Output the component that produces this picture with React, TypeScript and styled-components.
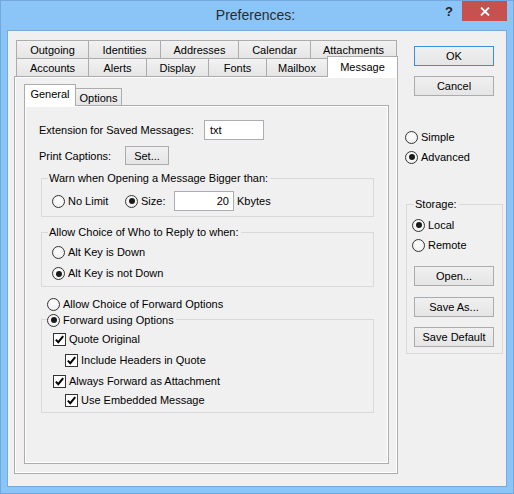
import React from 'react'
import styled, { createGlobalStyle } from 'styled-components'

const GlobalStyle = createGlobalStyle`
  body {
    margin: 0;
    font-family: "Liberation Sans", Arial, sans-serif;
    font-size: 11px;
    color: #000;
  }
  * {
    box-sizing: border-box;
  }
`

const Window = styled.div`
  width: 514px;
  height: 494px;
  background: #8bc5f7;
  border: 1px solid #74a8dc;
  display: flex;
  flex-direction: column;
`

const TitleBar = styled.div`
  height: 29px;
  flex-shrink: 0;
  display: flex;
  align-items: flex-start;
`

const Title = styled.div`
  flex: 1;
  padding-left: 72px;
  text-align: center;
  font-size: 14px;
  line-height: 29px;
  color: #2b2b2b;
`

const HelpButton = styled.div`
  width: 22px;
  height: 20px;
  margin-right: 2px;
  padding-top: 2px;
  text-align: center;
  font-weight: bold;
  font-size: 13px;
  line-height: 18px;
  color: #222;
`

const CloseButton = styled.div`
  width: 45px;
  height: 20px;
  margin-right: 6px;
  background: #c75050;
  display: flex;
  align-items: center;
  justify-content: center;
`

const Client = styled.div`
  flex: 1;
  margin: 0 6px 6px;
  border: 1px solid #76a9dc;
  background: #f0f0f0;
  display: flex;
  align-items: flex-start;
  padding: 9px 0 0 6px;
`

const TabControl = styled.div`
  width: 384px;
  display: flex;
  flex-direction: column;
`

const TabRow = styled.div`
  height: 18px;
  margin-left: 2px;
  display: flex;
  align-items: flex-end;
`

const Tab = styled.div<{ $w: number; $active?: boolean }>`
  width: ${(p) => p.$w}px;
  height: ${(p) => (p.$active ? 21 : 18)}px;
  margin-right: -1px;
  margin-bottom: ${(p) => (p.$active ? -1 : 0)}px;
  border: 1px solid #acacac;
  border-bottom: none;
  background: ${(p) => (p.$active ? '#fff' : 'linear-gradient(#f2f2f2, #e5e5e5)')};
  text-align: center;
  line-height: ${(p) => (p.$active ? 19 : 17)}px;
  padding-top: 1px;
  white-space: nowrap;
  position: ${(p) => (p.$active ? 'relative' : 'static')};
  z-index: ${(p) => (p.$active ? 1 : 'auto')};
`

const Panel = styled.div`
  height: 398px;
  border: 1px solid #acacac;
  background: #f0f0f0;
  box-shadow: inset 0 0 0 1px #fff;
  padding: 7px 8px 9px 9px;
  display: flex;
  flex-direction: column;
`

const InnerTabRow = styled.div`
  height: 21px;
  display: flex;
  align-items: flex-end;
`

const InnerTab = styled.div<{ $w: number; $active?: boolean }>`
  width: ${(p) => p.$w}px;
  height: ${(p) => (p.$active ? 22 : 17)}px;
  margin-bottom: ${(p) => (p.$active ? -1 : 0)}px;
  border: 1px solid #acacac;
  border-bottom: none;
  ${(p) => (p.$active ? '' : 'border-left: none;')}
  background: ${(p) => (p.$active ? '#fff' : 'linear-gradient(#f2f2f2, #e5e5e5)')};
  text-align: center;
  line-height: ${(p) => (p.$active ? 17 : 16)}px;
  padding-top: 1px;
  position: ${(p) => (p.$active ? 'relative' : 'static')};
  z-index: ${(p) => (p.$active ? 1 : 'auto')};
`

const InnerPanel = styled.div`
  height: 359px;
  border: 1px solid #acacac;
  background: #f0f0f0;
  box-shadow: inset 0 0 0 1px #fff;
  padding: 0 0 0 14px;
  display: flex;
  flex-direction: column;
  align-items: flex-start;
`

const FieldRow = styled.div<{ $h: number; $mt?: number; $ml?: number }>`
  height: ${(p) => p.$h}px;
  margin-top: ${(p) => p.$mt ?? 0}px;
  margin-left: ${(p) => p.$ml ?? 0}px;
  display: flex;
  align-items: center;
  white-space: nowrap;
`

const FieldLabel = styled.span<{ $w: number; $ml?: number }>`
  width: ${(p) => p.$w}px;
  margin-left: ${(p) => p.$ml ?? 0}px;
`

const TextBox = styled.div<{ $w: number; $right?: boolean }>`
  width: ${(p) => p.$w}px;
  height: 20px;
  border: 1px solid #abadb3;
  background: #fff;
  line-height: 18px;
  padding: 0 4px 0 5px;
  text-align: ${(p) => (p.$right ? 'right' : 'left')};
`

const Button = styled.div<{ $w: number; $h?: number; $mt?: number; $ml?: number; $default?: boolean }>`
  width: ${(p) => p.$w}px;
  height: ${(p) => p.$h ?? 20}px;
  margin-top: ${(p) => p.$mt ?? 0}px;
  margin-left: ${(p) => p.$ml ?? 0}px;
  border: 1px solid ${(p) => (p.$default ? '#3c8ee0' : '#acacac')};
  background: linear-gradient(#f0f0f0, #e5e5e5);
  display: flex;
  align-items: center;
  justify-content: center;
  white-space: nowrap;
`

const Group = styled.fieldset<{ $w: number; $mt: number; $ml: number }>`
  width: ${(p) => p.$w}px;
  margin: ${(p) => p.$mt}px 0 0 ${(p) => p.$ml}px;
  padding: 0;
  min-width: 0;
  border: 1px solid #d9d9d9;
`

const Legend = styled.legend<{ $ml: number; $pl?: number }>`
  margin-left: ${(p) => p.$ml}px;
  padding: 0 2px 0 ${(p) => p.$pl ?? 1}px;
  height: 13px;
  line-height: 13px;
  font-size: 11px;
  white-space: nowrap;
`

const GroupBody = styled.div<{ $pad: string }>`
  padding: ${(p) => p.$pad};
  display: flex;
  flex-direction: column;
  align-items: flex-start;
`

const Choice = styled.label<{ $w?: number }>`
  display: inline-flex;
  align-items: center;
  gap: 3px;
  height: 13px;
  line-height: 13px;
  white-space: nowrap;
  ${(p) => (p.$w ? `width: ${p.$w}px;` : '')}
`

const RadioCircle = styled.span<{ $on?: boolean }>`
  width: 13px;
  height: 13px;
  flex-shrink: 0;
  border-radius: 50%;
  border: 1px solid #333;
  background: radial-gradient(circle at 50% 40%, #fff, #ebebeb);
  display: flex;
  align-items: center;
  justify-content: center;
  &::after {
    content: '';
    width: 6px;
    height: 6px;
    border-radius: 50%;
    background: ${(p) => (p.$on ? '#1a1a1a' : 'transparent')};
  }
`

const CheckSquare = styled.span`
  width: 13px;
  height: 13px;
  flex-shrink: 0;
  border: 1px solid #333;
  background: #fff;
  display: flex;
  align-items: center;
  justify-content: center;
`

const SideColumn = styled.div`
  width: 98px;
  margin-left: 7px;
  display: flex;
  flex-direction: column;
  align-items: flex-start;
`

const Radio: React.FC<{ label: string; on?: boolean; w?: number }> = ({ label, on, w }) => (
  <Choice $w={w}>
    <RadioCircle $on={on} />
    <span>{label}</span>
  </Choice>
)

const Check: React.FC<{ label: string }> = ({ label }) => (
  <Choice>
    <CheckSquare>
      <svg width="11" height="11" viewBox="0 0 11 11">
        <path d="M1.8 5.6 L4.3 8.2 L9.2 2.2" fill="none" stroke="#000" strokeWidth="2" />
      </svg>
    </CheckSquare>
    <span>{label}</span>
  </Choice>
)

const App: React.FC = () => {
  const topTabs: [string, number][] = [
    ['Outgoing', 73],
    ['Identities', 73],
    ['Addresses', 79],
    ['Calendar', 73],
    ['Attachments', 87],
  ]
  const bottomTabs: [string, number][] = [
    ['Accounts', 73],
    ['Alerts', 59],
    ['Display', 63],
    ['Fonts', 59],
    ['Mailbox', 62],
  ]

  return (
    <>
      <GlobalStyle />
      <Window>
        <TitleBar>
          <Title>Preferences:</Title>
          <HelpButton>?</HelpButton>
          <CloseButton>
            <svg width="10" height="9" viewBox="0 0 10 9">
              <path d="M1 0.5 L9 8.5 M9 0.5 L1 8.5" stroke="#fff" strokeWidth="1.8" />
            </svg>
          </CloseButton>
        </TitleBar>
        <Client>
          <TabControl>
            <TabRow>
              {topTabs.map(([name, w]) => (
                <Tab key={name} $w={w}>{name}</Tab>
              ))}
            </TabRow>
            <TabRow>
              {bottomTabs.map(([name, w]) => (
                <Tab key={name} $w={w}>{name}</Tab>
              ))}
              <Tab $w={71} $active>Message</Tab>
            </TabRow>
            <Panel>
              <InnerTabRow>
                <InnerTab $w={52} $active>General</InnerTab>
                <InnerTab $w={46}>Options</InnerTab>
              </InnerTabRow>
              <InnerPanel>
                <FieldRow $h={20} $mt={14}>
                  <FieldLabel $w={165}>Extension for Saved Messages:</FieldLabel>
                  <TextBox $w={60}>txt</TextBox>
                </FieldRow>
                <FieldRow $h={19} $mt={6}>
                  <FieldLabel $w={86}>Print Captions:</FieldLabel>
                  <Button $w={44} $h={19}>Set...</Button>
                </FieldRow>

                <Group $w={333} $mt={7} $ml={2}>
                  <Legend $ml={6}>Warn when Opening a Message Bigger than:</Legend>
                  <GroupBody $pad="6px 0 5px 10px">
                    <FieldRow $h={20}>
                      <Radio label="No Limit" w={73} />
                      <Radio label="Size:" on w={49} />
                      <TextBox $w={60} $right>20</TextBox>
                      <FieldLabel $w={50} $ml={3}>Kbytes</FieldLabel>
                    </FieldRow>
                  </GroupBody>
                </Group>

                <Group $w={333} $mt={9} $ml={2}>
                  <Legend $ml={6}>Allow Choice of Who to Reply to when:</Legend>
                  <GroupBody $pad="3px 0 2px 10px">
                    <FieldRow $h={21}>
                      <Radio label="Alt Key is Down" />
                    </FieldRow>
                    <FieldRow $h={21}>
                      <Radio label="Alt Key is not Down" on />
                    </FieldRow>
                  </GroupBody>
                </Group>

                <FieldRow $h={16} $mt={9} $ml={8}>
                  <Radio label="Allow Choice of Forward Options" />
                </FieldRow>

                <Group $w={333} $mt={1} $ml={2}>
                  <Legend $ml={5} $pl={0}>
                    <Radio label="Forward using Options" on />
                  </Legend>
                  <GroupBody $pad="3px 0 2px 11px">
                    <FieldRow $h={21}>
                      <Check label="Quote Original" />
                    </FieldRow>
                    <FieldRow $h={20} $ml={12}>
                      <Check label="Include Headers in Quote" />
                    </FieldRow>
                    <FieldRow $h={20} $mt={1}>
                      <Check label="Always Forward as Attachment" />
                    </FieldRow>
                    <FieldRow $h={19} $ml={12}>
                      <Check label="Use Embedded Message" />
                    </FieldRow>
                  </GroupBody>
                </Group>
              </InnerPanel>
            </Panel>
          </TabControl>

          <SideColumn>
            <Button $w={80} $mt={6} $ml={9} $default>OK</Button>
            <Button $w={80} $mt={10} $ml={9}>Cancel</Button>
            <FieldRow $h={20} $mt={31}>
              <Radio label="Simple" />
            </FieldRow>
            <FieldRow $h={20}>
              <Radio label="Advanced" on />
            </FieldRow>
            <Group $w={97} $mt={31} $ml={1}>
              <Legend $ml={7}>Storage:</Legend>
              <GroupBody $pad="4px 0 6px 5px">
                <FieldRow $h={20}>
                  <Radio label="Local" on />
                </FieldRow>
                <FieldRow $h={20}>
                  <Radio label="Remote" />
                </FieldRow>
                <Button $w={80} $mt={11} $ml={2}>Open...</Button>
                <Button $w={80} $mt={11} $ml={2}>Save As...</Button>
                <Button $w={80} $mt={10} $ml={2}>Save Default</Button>
              </GroupBody>
            </Group>
          </SideColumn>
        </Client>
      </Window>
    </>
  )
}

export default App
